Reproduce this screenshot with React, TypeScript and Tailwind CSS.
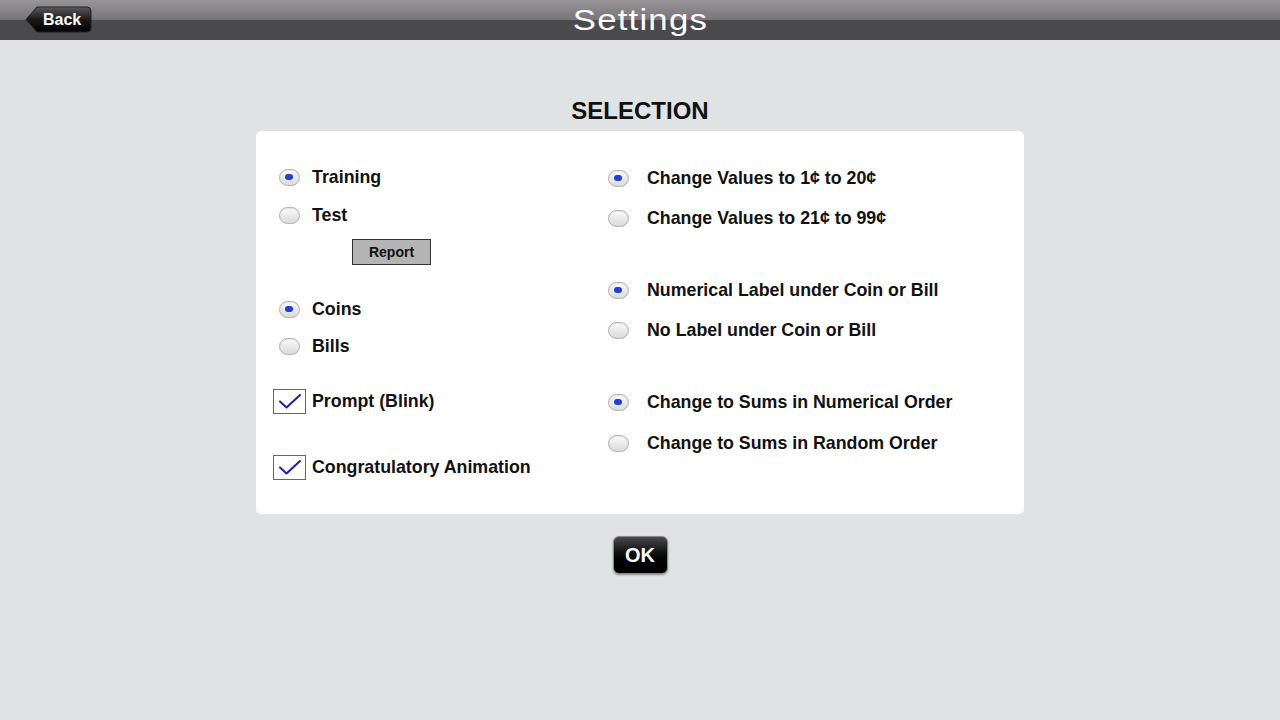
function Radio({ on }: { on?: boolean }) {
  return (
    <span className="flex h-[17px] w-[21px] items-center justify-center rounded-full border border-[#b0b0b0] bg-gradient-to-b from-[#fafafa] to-[#dadada] shadow-[inset_0_1px_1px_rgba(0,0,0,0.08)]">
      {on ? <span className="h-[6px] w-[8px] rounded-full bg-[#1f3fd6]" /> : null}
    </span>
  );
}

function RadioRow({
  on,
  label,
  gap = "ml-[11px]",
  className = "",
}: {
  on?: boolean;
  label: string;
  gap?: string;
  className?: string;
}) {
  return (
    <div className={`flex h-[24px] items-center ${className}`}>
      <div className="flex w-[24px] justify-center">
        <Radio on={on} />
      </div>
      <span className={`${gap} text-[17.8px] font-bold text-[#111]`}>{label}</span>
    </div>
  );
}

function CheckRow({ label, className = "" }: { label: string; className?: string }) {
  return (
    <div className={`flex items-center ${className}`}>
      <span className="flex h-[25px] w-[33px] items-center justify-center border border-[#666] bg-white">
        <svg width="26" height="18" viewBox="0 0 26 18">
          <path d="M3 9.5 L9.5 15.5 L23 3" fill="none" stroke="#1c1cb0" strokeWidth="2" strokeLinecap="round" strokeLinejoin="round" />
        </svg>
      </span>
      <span className="ml-[6px] text-[17.8px] font-bold text-[#111]">{label}</span>
    </div>
  );
}

export default function App() {
  return (
    <div
      className="flex h-[720px] w-[1280px] flex-col bg-[#e0e3e4]"
      style={{ fontFamily: '"Liberation Sans", Arial, sans-serif' }}
    >
      <header className="relative h-[40px] w-full">
        <div className="h-[20px] bg-gradient-to-b from-[#979597] to-[#777577]" />
        <div className="h-[20px] bg-[#4a494b]" />
        <button className="absolute left-[25px] top-[6px] flex h-[27px] items-center">
          <svg width="67" height="28" viewBox="0 0 67 28" className="absolute left-0 top-0">
            <defs>
              <linearGradient id="bk" x1="0" y1="0" x2="0" y2="1">
                <stop offset="0" stopColor="#5a5a5a" />
                <stop offset="0.5" stopColor="#1a1a1a" />
                <stop offset="1" stopColor="#000" />
              </linearGradient>
            </defs>
            <path d="M1 13.5 L12 1 H62 Q66 1 66 5 V22 Q66 26 62 26 H12 Z" fill="url(#bk)" stroke="#222" strokeWidth="1" />
          </svg>
          <span className="relative ml-[18px] text-[16px] font-bold text-white">Back</span>
        </button>
        <div className="absolute inset-x-0 top-[2px] flex justify-center">
          <h1 className="inline-block scale-x-[1.2] text-[29px] leading-[36px] tracking-[1px] text-white">Settings</h1>
        </div>
      </header>

      <div className="mt-[58px] text-center text-[24px] font-bold leading-[26px] text-[#111]">SELECTION</div>

      <main className="mx-auto mt-[7px] flex h-[383px] w-[768px] rounded-[5px] bg-white">
        <div className="ml-[21px] mt-[34px] flex w-[330px] flex-col">
          <RadioRow on label="Training" />
          <RadioRow label="Test" className="mt-[14px]" />
          <div className="ml-[75px] mt-[12px] flex h-[26px] w-[79px] items-center justify-center border border-[#333] bg-[#b4b4b4] text-[14px] font-bold text-[#111]">
            Report
          </div>
          <RadioRow on label="Coins" className="mt-[32px]" />
          <RadioRow label="Bills" className="mt-[13px]" />
          <CheckRow label="Prompt (Blink)" className="ml-[-4px] mt-[30px]" />
          <CheckRow label="Congratulatory Animation" className="ml-[-4px] mt-[39px]" />
        </div>
        <div className="ml-[-1px] mt-[35px] flex flex-col">
          <RadioRow on gap="ml-[17px]" label="Change Values to 1¢ to 20¢" />
          <RadioRow gap="ml-[17px]" label="Change Values to 21¢ to 99¢" className="mt-[16px]" />
          <RadioRow on gap="ml-[17px]" label="Numerical Label under Coin or Bill" className="mt-[48px]" />
          <RadioRow gap="ml-[17px]" label="No Label under Coin or Bill" className="mt-[16px]" />
          <RadioRow on gap="ml-[17px]" label="Change to Sums in Numerical Order" className="mt-[48px]" />
          <RadioRow gap="ml-[17px]" label="Change to Sums in Random Order" className="mt-[17px]" />
        </div>
      </main>

      <div className="mt-[22px] flex justify-center">
        <button className="flex h-[38px] w-[55px] items-center justify-center rounded-[6px] border border-[#888] bg-gradient-to-b from-[#4a4a4a] via-[#0a0a0a] to-black text-[20px] font-bold text-white shadow-[0_1px_2px_rgba(0,0,0,0.4)]">
          OK
        </button>
      </div>
    </div>
  );
}
